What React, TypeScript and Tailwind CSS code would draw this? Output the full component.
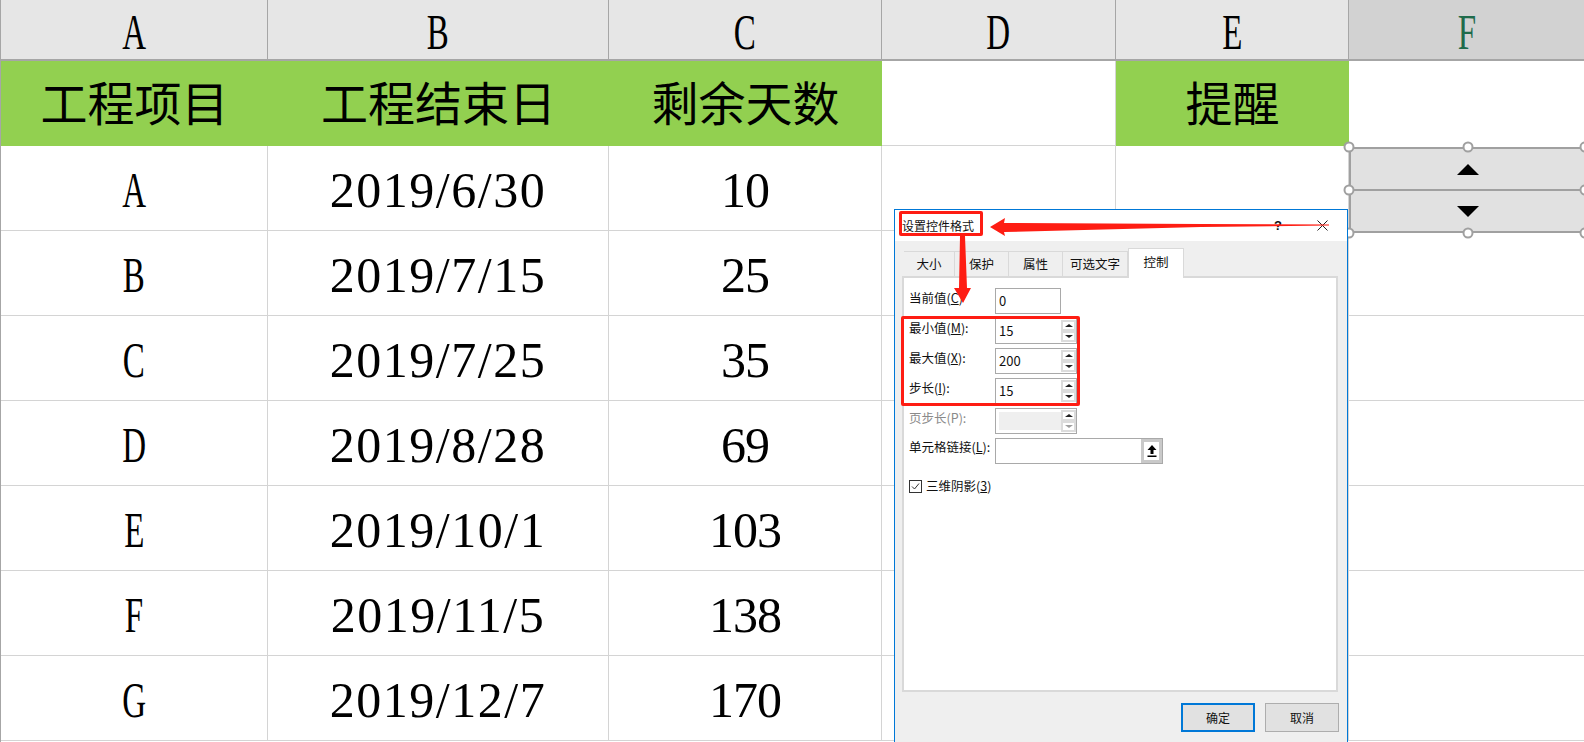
const cjkSerif = "font-['Liberation_Serif','Noto_Sans_CJK_SC',serif]";

const rows = [
  ['A', '2019/6/30', '10'],
  ['B', '2019/7/15', '25'],
  ['C', '2019/7/25', '35'],
  ['D', '2019/8/28', '69'],
  ['E', '2019/10/1', '103'],
  ['F', '2019/11/5', '138'],
  ['G', '2019/12/7', '170'],
];

// Latin capitals in the sheet are half width, so they get squeezed
const Letter = ({ children, className = '' }: { children: string; className?: string }) => (
  <span className={`inline-block scale-x-[0.66] text-[50px] leading-none ${className}`}>{children}</span>
);

const Handle = ({ className }: { className: string }) => (
  <span className={`absolute h-[11px] w-[11px] -translate-x-1/2 -translate-y-1/2 rounded-full border-2 border-[#a0a0a0] bg-white ${className}`} />
);

const SpinButtons = ({ disabled = false }: { disabled?: boolean }) => (
  <div className="flex w-[15px] flex-col self-center">
    <div className="flex h-[11px] items-center justify-center border-2 border-[#dcdcdc] bg-white">
      <span className="h-0 w-0 border-x-[4px] border-b-[3px] border-x-transparent border-b-[#222]" />
    </div>
    <div className="flex h-[11px] items-center justify-center border-2 border-[#dcdcdc] bg-white">
      <span className={`h-0 w-0 border-x-[4px] border-t-[3px] border-x-transparent ${disabled ? 'border-t-[#a0a0a0]' : 'border-t-[#222]'}`} />
    </div>
  </div>
);

const FormRow = ({
  label,
  value,
  spin = false,
  disabled = false,
}: {
  label: React.ReactNode;
  value?: string;
  spin?: boolean;
  disabled?: boolean;
}) => (
  <div className="flex h-[26px] items-start">
    <div className={`w-[86px] pt-[2px] text-[12.5px] leading-[16px] ${disabled ? 'text-[#8a8a8a]' : 'text-[#111]'}`}>{label}</div>
    <div className={`flex h-[26px] border border-[#a9a9a9] ${spin ? 'w-[82px]' : 'w-[66px]'} ${disabled ? 'p-[3px] pr-0' : 'bg-white'}`}>
      {disabled ? (
        <div className="flex-1 bg-[#efefef]" />
      ) : (
        <div className="flex-1 pl-[3px] text-[13px] leading-[23px] text-[#111]">{value}</div>
      )}
      {spin && <SpinButtons disabled={disabled} />}
    </div>
  </div>
);

const Dialog = () => {
  const tabs = [
    ['大小', 'w-[51px]'],
    ['保护', 'w-[54px]'],
    ['属性', 'w-[54px]'],
    ['可选文字', 'w-[65px]'],
  ];

  return (
    <div className="absolute left-[893px] top-[209px] flex h-[533px] w-[454px] flex-col border-x border-t border-[#0078d7] bg-[#efefef] font-['Noto_Sans_CJK_SC',sans-serif]">
      <div className="flex h-[31px] items-center justify-between bg-white pl-[7px] pr-[19px] text-[12px] text-[#111]">
        <span>设置控件格式</span>
        <div className="flex items-center gap-[35px]">
          <span className="font-['Liberation_Sans',sans-serif] text-[13px] font-bold">?</span>
          <svg width="11" height="11" viewBox="0 0 11 11" fill="none" stroke="#222" strokeWidth="1">
            <path d="M0.5 0.5l10 10M10.5 0.5l-10 10" />
          </svg>
        </div>
      </div>

      <div className="ml-[9px] mt-[7px] flex items-end">
        {tabs.map(([name, width]) => (
          <div key={name} className={`flex h-[25px] items-center justify-center border-r border-t border-[#d9d9d9] pt-[1px] text-[12.5px] text-[#111] ${width}`}>
            {name}
          </div>
        ))}
        <div className="z-10 -mb-[2px] flex h-[30px] w-[56px] items-center justify-center border-x border-t border-[#d9d9d9] bg-white pb-[3px] text-[12.5px] text-[#111]">
          控制
        </div>
      </div>

      <div className="ml-[7px] mr-[9px] flex h-[416px] flex-col gap-[4px] border-2 border-[#d9d9d9] bg-white pl-[5px] pt-[10px]">
        <FormRow label={<>当前值(<u>C</u>)</>} value="0" />
        <FormRow label={<>最小值(<u>M</u>):</>} value="15" spin />
        <FormRow label={<>最大值(<u>X</u>):</>} value="200" spin />
        <FormRow label={<>步长(<u>I</u>):</>} value="15" spin />
        <FormRow label={<>页步长(P):</>} spin disabled />
        <div className="flex h-[26px] items-start">
          <div className="w-[86px] pt-[1px] text-[12.5px] leading-[16px] text-[#111]">
            单元格链接(<u>L</u>):
          </div>
          <div className="flex h-[26px] w-[168px] border border-[#a9a9a9] bg-white">
            <div className="flex-1" />
            <div className="flex w-[21px] items-center justify-center bg-[#c9c9c9] p-[3px]">
              <div className="flex h-full w-full items-center justify-center bg-white">
                <svg width="10" height="12" viewBox="0 0 10 12" fill="#000">
                  <path d="M5 0L9.5 5H6.5V9H3.5V5H0.5ZM0.5 10.5H9.5V12H0.5Z" />
                </svg>
              </div>
            </div>
          </div>
        </div>
        <div className="mt-[9px] flex items-center gap-[4px] text-[12.5px] text-[#111]">
          <div className="flex h-[13px] w-[13px] items-center justify-center border border-[#333]">
            <svg width="9" height="9" viewBox="0 0 9 9" fill="none" stroke="#333" strokeWidth="1">
              <path d="M1 4.5L3.5 7L8 1.5" />
            </svg>
          </div>
          <span>
            三维阴影(<u>3</u>)
          </span>
        </div>
      </div>

      <div className="mr-[8px] mt-[11px] flex justify-end gap-[10px] text-[12px] text-[#111]">
        <div className="flex h-[29px] w-[74px] items-center justify-center border-2 border-[#0078d7] bg-[#e1e1e1]">确定</div>
        <div className="flex h-[29px] w-[74px] items-center justify-center border border-[#adadad] bg-[#e1e1e1]">取消</div>
      </div>
    </div>
  );
};

const Annotations = () => (
  <>
    <div className="absolute left-[898px] top-[211px] h-[25px] w-[84px] rounded-[2px] border-[3px] border-[#fe1d13]" />
    <div className="absolute left-[900px] top-[316px] h-[90px] w-[179px] rounded-[2px] border-[3px] border-[#fe1d13]" />
    <svg className="absolute left-0 top-0" width="1584" height="742" fill="#fe1d13">
      <path d="M989 227L1004 218L1003 223L1200 224L1328 224.5L1328 225.5L1200 227L1003 232L1004 236Z" />
      <path d="M959 236H964L966 288L970 288L962 303L953 288L958 288Z" />
    </svg>
  </>
);

const SpinControl = () => (
  <div className="absolute left-[1348px] top-[147px] h-[86px] w-[236px]">
    <div className="flex h-full flex-col border-y-2 border-l-2 border-[#a0a0a0] bg-[#e1e1e1]">
      <div className="flex flex-1 items-center justify-center border-b-2 border-[#a0a0a0]">
        <span className="h-0 w-0 border-x-[11px] border-b-[11px] border-x-transparent border-b-black" />
      </div>
      <div className="flex flex-1 items-center justify-center">
        <span className="h-0 w-0 border-x-[11px] border-t-[11px] border-x-transparent border-t-black" />
      </div>
    </div>
    <Handle className="left-0 top-0" />
    <Handle className="left-[119px] top-0" />
    <Handle className="left-[236px] top-0" />
    <Handle className="left-0 top-[43px]" />
    <Handle className="left-[236px] top-[43px]" />
    <Handle className="left-0 top-[86px]" />
    <Handle className="left-[119px] top-[86px]" />
    <Handle className="left-[236px] top-[86px]" />
  </div>
);

const columns = 'grid grid-cols-[267px_341px_273px_234px_233px_235px]';

export default function App() {
  const headerCell = 'flex h-[61px] items-center justify-center border-b-2 border-r border-[#a6a6a6] bg-[#e6e6e6] pt-[4px] text-black';
  const greenCell = 'flex h-[85px] items-center justify-center bg-[#92d050] pt-[4px] text-[47px] text-black';
  const dataCell = 'flex h-[85px] items-center justify-center border-b border-r border-[#d4d4d4] pt-[4px] text-black';

  return (
    <div className={`relative h-[742px] w-[1584px] overflow-hidden border-l border-[#a6a6a6] bg-white ${cjkSerif}`}>
      <div className={columns}>
        {['A', 'B', 'C', 'D', 'E'].map((col) => (
          <div key={col} className={headerCell}>
            <Letter>{col}</Letter>
          </div>
        ))}
        <div className="flex h-[61px] items-center justify-center border-b-2 border-[#a6a6a6] bg-[#d2d2d2] pt-[4px]">
          <Letter className="text-[#1f6b4b]">F</Letter>
        </div>

        <div className={greenCell}>工程项目</div>
        <div className={greenCell}>工程结束日</div>
        <div className={greenCell}>剩余天数</div>
        <div className="h-[85px] border-b border-r border-[#d4d4d4]" />
        <div className={greenCell}>提醒</div>
        <div className="h-[85px]" />

        {rows.map(([name, date, days]) => (
          <div key={name} className="contents">
            <div className={dataCell}>
              <Letter>{name}</Letter>
            </div>
            <div className={`${dataCell} text-[50px] tracking-[1.5px]`}>{date}</div>
            <div className={`${dataCell} text-[50px] tracking-[-1px]`}>{days}</div>
            <div className={dataCell} />
            <div className={dataCell} />
            <div className="h-[85px] border-b border-[#d4d4d4]" />
          </div>
        ))}
      </div>

      <SpinControl />
      <Dialog />
      <Annotations />
    </div>
  );
}
